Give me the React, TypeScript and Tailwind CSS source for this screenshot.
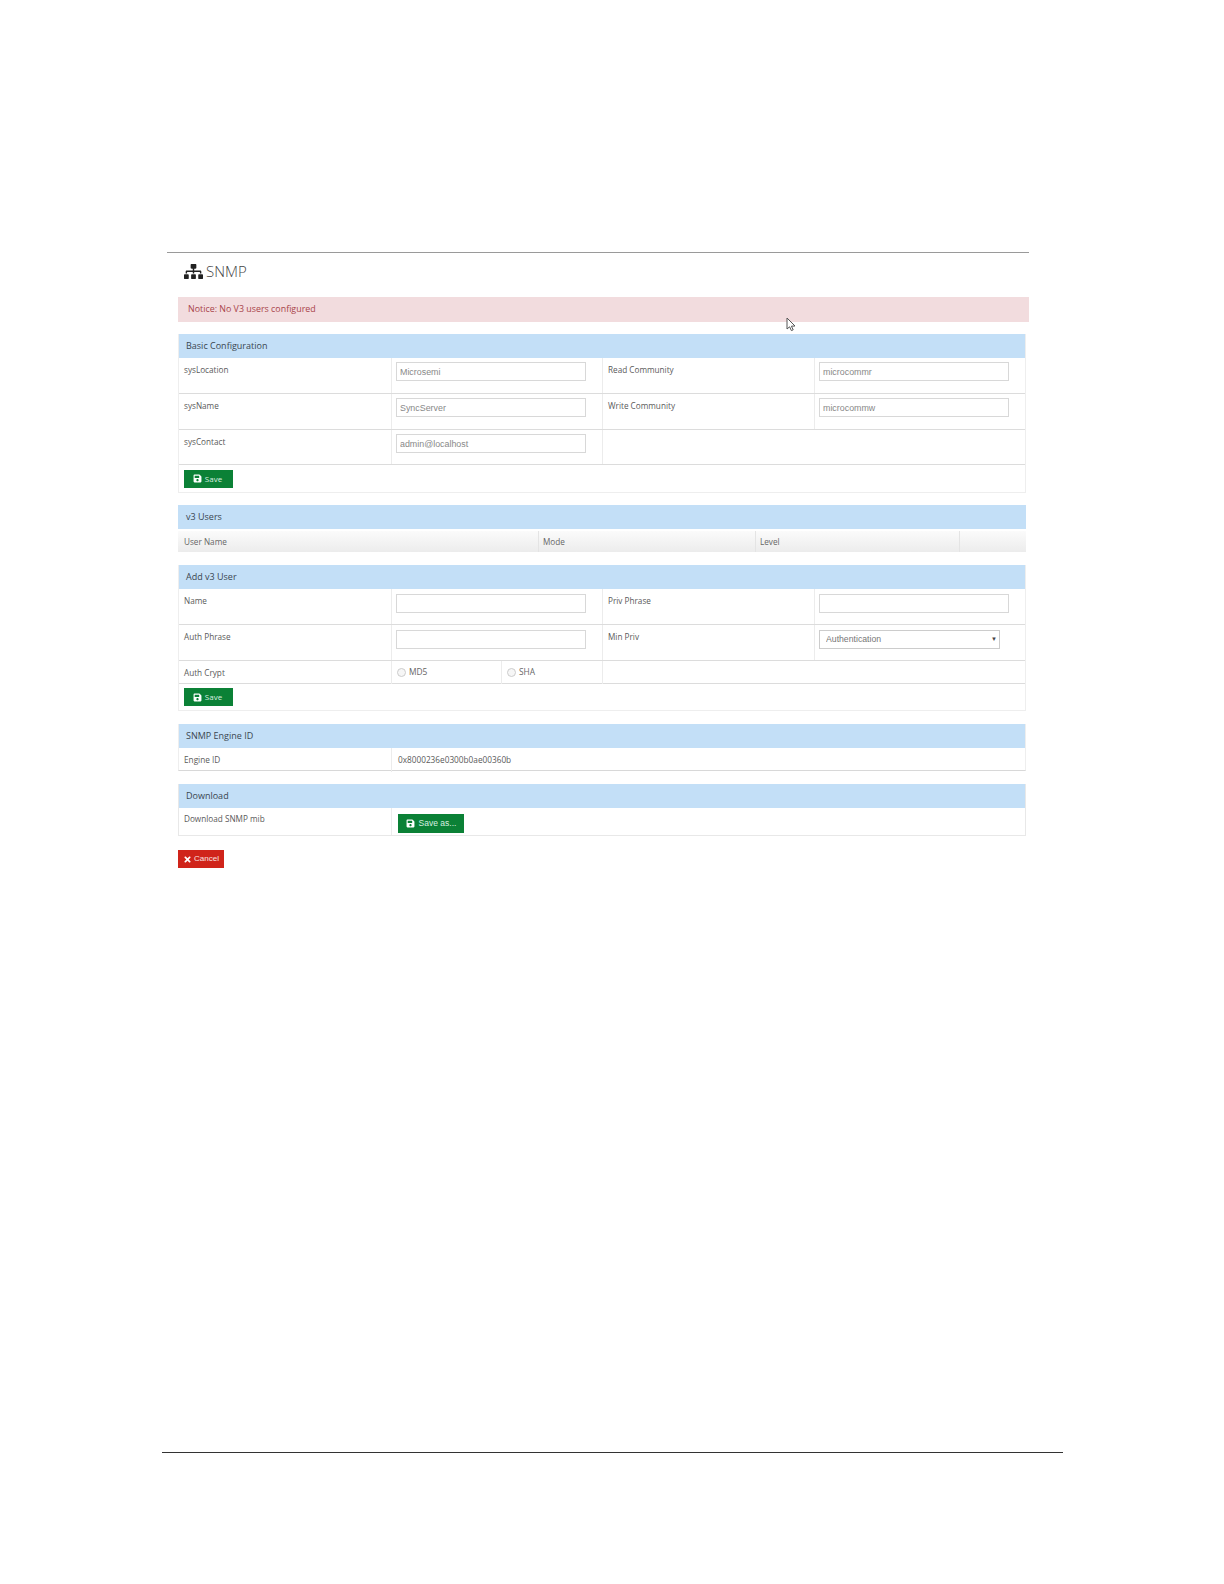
import { FaSitemap, FaSave, FaTimes } from "react-icons/fa";

const dividerCls = "border-r border-[#ececec]";
const labelCls = "pl-[5px] pt-[6px] text-[8.2px] leading-[12px] text-[#5a5a5a]";
const valueCls = "flex items-start pl-[4px]";

function Header({ title, inset = "pl-[7px]" }: { title: string; inset?: string }) {
  return (
    <div className={`h-[24px] bg-[#c3dff7] ${inset} text-[9px] leading-[24px] text-[#3a4650]`}>
      {title}
    </div>
  );
}

function TextBox({ value = "" }: { value?: string }) {
  return (
    <input
      readOnly
      value={value}
      className="h-[19px] w-[190px] border border-[#d8d8d8] bg-white px-[3px] font-['Liberation_Sans',sans-serif] text-[8.9px] text-[#888] outline-none"
    />
  );
}

function SaveButton() {
  return (
    <button className="flex h-[18px] w-[49px] items-center justify-center gap-[3px] bg-[#0b8136] pr-[2px] text-[8px] text-[#d8efe0]">
      <FaSave className="text-[9px] text-white" />
      Save
    </button>
  );
}

function FormRow({
  cells,
  height,
  merged,
  inputTop = "pt-[5px]",
}: {
  cells: React.ReactNode[];
  height: string;
  merged?: boolean;
  inputTop?: string;
}) {
  return (
    <div className={`grid grid-cols-[213px_211px_212px_1fr] ${height} border-b border-[#dcdcdc]`}>
      {cells.map((cell, i) => (
        <div
          key={i}
          className={`${i % 2 === 0 ? labelCls : `${valueCls} ${inputTop}`} ${i < 2 || (i === 2 && !merged) ? dividerCls : ""}`}
        >
          {cell}
        </div>
      ))}
    </div>
  );
}

function Radio({ label }: { label: string }) {
  return (
    <div className="flex items-center gap-[3px] pl-[5px] text-[8.4px] leading-[22px] text-[#666]">
      <input type="radio" className="h-[9px] w-[9px] appearance-none rounded-full border border-[#ccc] bg-[#f6f6f6]" />
      {label}
    </div>
  );
}

export default function App() {
  return (
    <div className="relative min-h-[1584px] bg-white font-['Open_Sans',sans-serif]">
      <div className="pl-[167px] pt-[252px]">
        <div className="w-[862px] border-t border-[#9a9a9a]">
          <div className="flex h-[44px] items-center gap-[3px] pb-[7px] pl-[17px] text-[#444]">
            <FaSitemap className="text-[19px] text-[#222]" />
            <span className="text-[15px] font-light">SNMP</span>
          </div>

          <div className="ml-[11px] h-[25px] bg-[#f2dcde] pl-[10px] text-[8.9px] leading-[24px] text-[#a9444a]">
            Notice: No V3 users configured
          </div>

          <div className="ml-[11px] mr-[3px]">
            <div className="mt-[12px] border-x border-b border-[#eeeeee]">
              <Header title="Basic Configuration" />
              <FormRow
                height="h-[36px]"
                inputTop="pt-[4px]"
                cells={["sysLocation", <TextBox value="Microsemi" />, "Read Community", <TextBox value="microcommr" />]}
              />
              <FormRow
                height="h-[36px]"
                inputTop="pt-[4px]"
                cells={["sysName", <TextBox value="SyncServer" />, "Write Community", <TextBox value="microcommw" />]}
              />
              <FormRow
                height="h-[35px]"
                inputTop="pt-[4px]"
                merged
                cells={["sysContact", <TextBox value="admin@localhost" />, "", ""]}
              />
              <div className="flex h-[27px] items-center pl-[5px]">
                <SaveButton />
              </div>
            </div>

            <div className="mt-[12px]">
              <Header title="v3 Users" inset="pl-[8px]" />
              <div className="mt-[2px] grid h-[21px] grid-cols-[361px_217px_204px_1fr] bg-gradient-to-b from-[#fbfbfb] to-[#ececec] text-[8.2px] leading-[21px] text-[#666]">
                <div className="border-r border-[#e4e4e4] pl-[6px]">User Name</div>
                <div className="border-r border-[#e4e4e4] pl-[4px]">Mode</div>
                <div className="border-r border-[#e4e4e4] pl-[4px]">Level</div>
                <div />
              </div>
            </div>

            <div className="mt-[13px] border-x border-b border-[#eeeeee]">
              <Header title="Add v3 User" />
              <FormRow height="h-[36px]" cells={["Name", <TextBox />, "Priv Phrase", <TextBox />]} />
              <FormRow
                height="h-[36px]"
                cells={[
                  "Auth Phrase",
                  <TextBox />,
                  "Min Priv",
                  <div className="relative flex h-[19px] w-[181px]">
                    <select className="h-[19px] w-full appearance-none border border-[#cccccc] bg-white pl-[6px] font-['Liberation_Sans',sans-serif] text-[8.7px] text-[#777] outline-none">
                      <option>Authentication</option>
                    </select>
                    <span className="absolute inset-y-0 right-[3px] flex items-center text-[6px] text-[#444]">▼</span>
                  </div>,
                ]}
              />
              <div className="grid h-[23px] grid-cols-[213px_110px_101px_1fr] border-b border-[#dcdcdc]">
                <div className={`${dividerCls} pl-[5px] text-[8.2px] leading-[23px] text-[#5a5a5a]`}>Auth Crypt</div>
                <div className={dividerCls}>
                  <Radio label="MD5" />
                </div>
                <div className={dividerCls}>
                  <Radio label="SHA" />
                </div>
                <div />
              </div>
              <div className="flex h-[26px] items-center pl-[5px]">
                <SaveButton />
              </div>
            </div>

            <div className="mt-[13px] border-x border-b border-x-[#eeeeee] border-b-[#d8d8d8]">
              <Header title="SNMP Engine ID" />
              <div className="grid h-[22px] grid-cols-[213px_1fr] text-[8.25px] leading-[24px] text-[#5a5a5a]">
                <div className={`${dividerCls} pl-[5px]`}>Engine ID</div>
                <div className="pl-[6px]">0x8000236e0300b0ae00360b</div>
              </div>
            </div>

            <div className="mt-[13px] border-x border-b border-[#e8e8e8]">
              <Header title="Download" />
              <div className="grid h-[27px] grid-cols-[213px_1fr]">
                <div className={`${dividerCls} pl-[5px] pt-[5px] text-[8.2px] leading-[12px] text-[#5a5a5a]`}>Download SNMP mib</div>
                <div className="pl-[6px] pt-[6px]">
                  <button className="flex h-[19px] w-[66px] items-center justify-center gap-[4px] bg-[#0b8136] font-['Liberation_Sans',sans-serif] text-[8.5px] text-[#d8efe0]">
                    <FaSave className="text-[9px] text-white" />
                    Save as...
                  </button>
                </div>
              </div>
            </div>

            <button className="mt-[14px] flex h-[18px] w-[46px] items-center justify-center gap-[2px] bg-[#d0241a] font-['Liberation_Sans',sans-serif] text-[8px] text-[#fbe3e0]">
              <FaTimes className="text-[9px] text-white" />
              Cancel
            </button>
          </div>
        </div>
      </div>

      <div className="ml-[162px] mt-[584px] w-[901px] border-t border-[#333]" />

      {/* mouse pointer caught in the screenshot */}
      <svg className="absolute left-[786px] top-[317px]" width="11" height="15" viewBox="0 0 11 15">
        <path d="M1 1 L1 12 L3.6 9.8 L5.4 13.6 L7.2 12.8 L5.4 9.2 L9 9 Z" fill="#fff" stroke="#555" strokeWidth="1" />
      </svg>
    </div>
  );
}
